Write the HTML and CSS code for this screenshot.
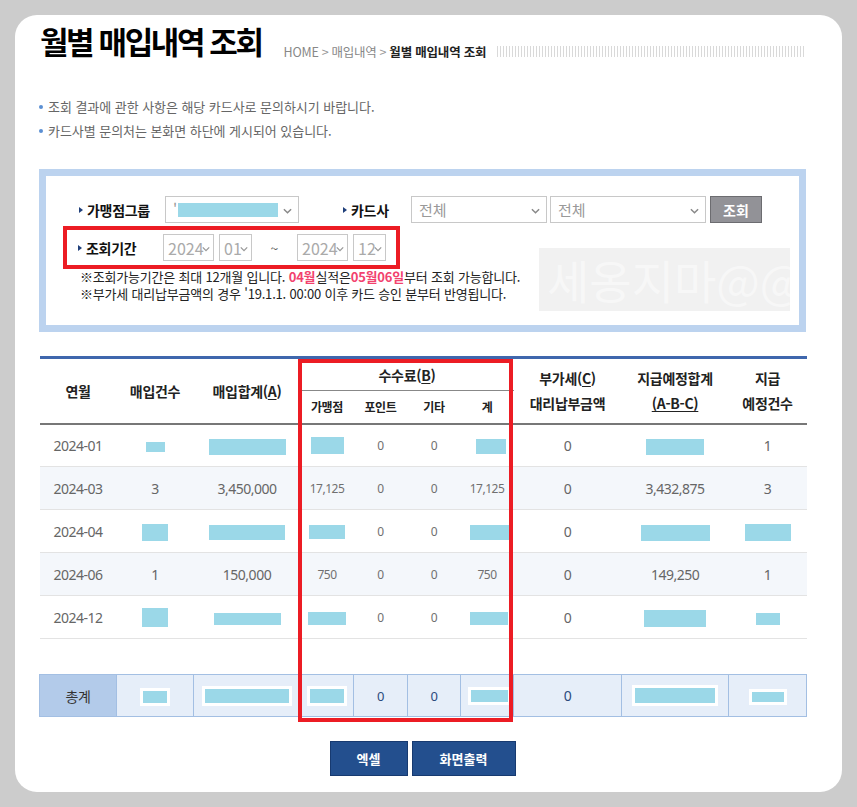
FILE: index.html
```html
<!DOCTYPE html>
<html lang="ko">
<head>
<meta charset="utf-8">
<title>월별 매입내역 조회</title>
<link rel="stylesheet" href="styles.css">
</head>
<body>
<div class="panel">
  <div class="title-row">
    <h1 class="title">월별 매입내역 조회</h1>
    <div class="crumb">HOME<span class="sep">&gt;</span>매입내역<span class="sep">&gt;</span><b>월별 매입내역 조회</b></div>
    <div class="stripes"></div>
  </div>

  <ul class="info">
    <li>조회 결과에 관한 사항은 해당 카드사로 문의하시기 바랍니다.</li>
    <li>카드사별 문의처는 본화면 하단에 게시되어 있습니다.</li>
  </ul>

  <div class="search">
    <div class="watermark">세옹지마@@</div>
    <div class="row">
      <div class="label w87">가맹점그룹</div>
      <div class="sel w134"><span class="val">'</span><span class="redact" style="width:100px;height:14px;margin-left:1px"></span><svg class="chev" viewBox="0 0 10 6"><path d="M1 1l4 4 4-4" fill="none" stroke="#888" stroke-width="1.6"/></svg></div>
      <div class="label w69 ml43">카드사</div>
      <div class="sel w136"><span class="val">전체</span><svg class="chev" viewBox="0 0 10 6"><path d="M1 1l4 4 4-4" fill="none" stroke="#888" stroke-width="1.6"/></svg></div>
      <div class="sel w156 ml3"><span class="val">전체</span><svg class="chev" viewBox="0 0 10 6"><path d="M1 1l4 4 4-4" fill="none" stroke="#888" stroke-width="1.6"/></svg></div>
      <button class="btn-search">조회</button>
    </div>
    <div class="row row2">
      <div class="label w86">조회기간</div>
      <div class="sel small w51"><span class="val">2024</span><svg class="chev" viewBox="0 0 10 6"><path d="M1 1l4 4 4-4" fill="none" stroke="#999" stroke-width="1.6"/></svg></div>
      <div class="sel small w33 ml5"><span class="val">01</span><svg class="chev" viewBox="0 0 10 6"><path d="M1 1l4 4 4-4" fill="none" stroke="#999" stroke-width="1.6"/></svg></div>
      <span class="tilde">~</span>
      <div class="sel small w51"><span class="val">2024</span><svg class="chev" viewBox="0 0 10 6"><path d="M1 1l4 4 4-4" fill="none" stroke="#999" stroke-width="1.6"/></svg></div>
      <div class="sel small w33 ml5"><span class="val">12</span><svg class="chev" viewBox="0 0 10 6"><path d="M1 1l4 4 4-4" fill="none" stroke="#999" stroke-width="1.6"/></svg></div>
    </div>
    <div class="notes">
      <p>※조회가능기간은 최대 12개월 입니다. <em>04월</em>실적은<em>05월06일</em>부터 조회 가능합니다.</p>
      <p>※부가세 대리납부금액의 경우 '19.1.1. 00:00 이후 카드 승인 분부터 반영됩니다.</p>
    </div>
    <div class="mark-search"></div>
  </div>

  <div class="table-wrap">
    <table class="grid">
      <colgroup>
        <col style="width:77px"><col style="width:77px"><col style="width:107px"><col style="width:53px"><col style="width:54px"><col style="width:53px"><col style="width:53px"><col style="width:108px"><col style="width:107px"><col style="width:78px">
      </colgroup>
      <thead>
        <tr class="h1">
          <th rowspan="2">연월</th>
          <th rowspan="2">매입건수</th>
          <th rowspan="2">매입합계(<u>A</u>)</th>
          <th colspan="4" class="fee">수수료(<u>B</u>)</th>
          <th rowspan="2" class="two">부가세(<u>C</u>)<br>대리납부금액</th>
          <th rowspan="2" class="two">지급예정합계<br><u>(A-B-C)</u></th>
          <th rowspan="2" class="two">지급<br>예정건수</th>
        </tr>
        <tr class="h2">
          <th class="sub">가맹점</th>
          <th class="sub">포인트</th>
          <th class="sub">기타</th>
          <th class="sub">계</th>
        </tr>
      </thead>
      <tbody>
        <tr>
          <td>2024-01</td>
          <td><span class="redact" style="width:19px;height:10px"></span></td>
          <td><span class="redact" style="width:77px;height:16px"></span></td>
          <td class="s"><span class="redact" style="width:33px;height:17px"></span></td>
          <td class="s">0</td>
          <td class="s">0</td>
          <td class="s"><span class="redact" style="width:30px;height:15px;margin-left:8px"></span></td>
          <td>0</td>
          <td><span class="redact" style="width:58px;height:16px"></span></td>
          <td>1</td>
        </tr>
        <tr class="alt">
          <td>2024-03</td>
          <td>3</td>
          <td>3,450,000</td>
          <td class="s">17,125</td>
          <td class="s">0</td>
          <td class="s">0</td>
          <td class="s">17,125</td>
          <td>0</td>
          <td>3,432,875</td>
          <td>3</td>
        </tr>
        <tr>
          <td>2024-04</td>
          <td><span class="redact" style="width:26px;height:17px"></span></td>
          <td><span class="redact" style="width:76px;height:15px"></span></td>
          <td class="s"><span class="redact" style="width:36px;height:14px"></span></td>
          <td class="s">0</td>
          <td class="s">0</td>
          <td class="s"><span class="redact" style="width:43px;height:15px;margin-left:8px"></span></td>
          <td>0</td>
          <td><span class="redact" style="width:69px;height:16px"></span></td>
          <td><span class="redact" style="width:46px;height:17px"></span></td>
        </tr>
        <tr class="alt">
          <td>2024-06</td>
          <td>1</td>
          <td>150,000</td>
          <td class="s">750</td>
          <td class="s">0</td>
          <td class="s">0</td>
          <td class="s">750</td>
          <td>0</td>
          <td>149,250</td>
          <td>1</td>
        </tr>
        <tr>
          <td>2024-12</td>
          <td><span class="redact" style="width:26px;height:19px"></span></td>
          <td><span class="redact" style="width:67px;height:12px"></span></td>
          <td class="s"><span class="redact" style="width:38px;height:13px"></span></td>
          <td class="s">0</td>
          <td class="s">0</td>
          <td class="s"><span class="redact" style="width:38px;height:13px;margin-left:4px"></span></td>
          <td>0</td>
          <td><span class="redact" style="width:62px;height:17px"></span></td>
          <td><span class="redact" style="width:24px;height:12px"></span></td>
        </tr>
        <tr class="empty"><td colspan="10"></td></tr>
      </tbody>
      <tfoot>
        <tr>
          <td class="total">총계</td>
          <td><span class="redact framed" style="width:24px;height:12px"></span></td>
          <td><span class="redact framed" style="width:84px;height:14px"></span></td>
          <td class="s"><span class="redact framed" style="width:34px;height:14px"></span></td>
          <td class="s">0</td>
          <td class="s">0</td>
          <td class="s"><span class="redact framed" style="width:37px;height:12px;margin-left:4px"></span></td>
          <td>0</td>
          <td><span class="redact framed" style="width:80px;height:15px"></span></td>
          <td><span class="redact framed" style="width:32px;height:10px"></span></td>
        </tr>
      </tfoot>
    </table>
    <div class="mark-table"></div>
  </div>

  <div class="actions">
    <button class="btn-blue w78">엑셀</button>
    <button class="btn-blue w104">화면출력</button>
  </div>
</div>
</body>
</html>
```

FILE: styles.css
```css
* { box-sizing: border-box; }
html, body { margin: 0; padding: 0; }
body {
  background: #cccccc;
  font-family: "Noto Sans CJK KR", "Noto Sans", sans-serif;
  color: #333;
  width: 857px;
  height: 807px;
  overflow: hidden;
}
.panel {
  margin: 15px;
  width: 827px;
  height: 777px;
  background: #fff;
  border-radius: 22px;
  padding: 7px 36px 0 24px;
}
.title-row {
  display: flex;
  align-items: flex-end;
  height: 38px;
}
.title {
  margin: 0 0 0 1px;
  font-size: 31px;
  line-height: 38px;
  font-weight: 700;
  letter-spacing: -2.4px;
  color: #000;
  white-space: nowrap;
}
.crumb {
  margin-left: 22px;
  font-size: 12.5px;
  line-height: 16px;
  color: #888;
  letter-spacing: -0.2px;
  white-space: nowrap;
  padding-bottom: 0;
}
.crumb .sep { color: #999; margin: 0 3px; }
.crumb b { color: #222; font-weight: 700; }
.stripes {
  flex: 1;
  height: 11px;
  margin-left: 11px;
  margin-bottom: 3px;
  background: repeating-linear-gradient(90deg, #d9d9d9 0 1px, transparent 1px 3px);
}

.info {
  list-style: none;
  margin: 35px 0 0 0;
  padding: 0;
}
.info li {
  position: relative;
  font-size: 13px;
  line-height: 24px;
  color: #666;
  padding-left: 9px;
  letter-spacing: -0.05px;
}
.info li::before {
  content: "";
  position: absolute;
  left: 0;
  top: 10px;
  width: 4px;
  height: 4px;
  border-radius: 50%;
  background: #5b8fd3;
}

.search {
  position: relative;
  margin-top: 26px;
  width: 767px;
  height: 163px;
  border: 7px solid #bcd3ef;
  padding: 20px 0 0 32px;
}
.row {
  position: relative;
  z-index: 1;
  display: flex;
  align-items: center;
  height: 27px;
}
.row2 { margin-top: 11px; margin-left: -1px; }
.label {
  position: relative;
  padding-left: 9px;
  font-size: 14px;
  font-weight: 700;
  color: #111;
  white-space: nowrap;
  letter-spacing: -0.3px;
}
.label::before {
  content: "";
  position: absolute;
  left: 1px;
  top: 50%;
  margin-top: -3px;
  border-left: 4px solid #1f3f7a;
  border-top: 3.5px solid transparent;
  border-bottom: 3.5px solid transparent;
}
.w87 { width: 87px; }
.w86 { width: 86px; }
.w69 { width: 69px; }
.ml43 { margin-left: 43px; }
.ml3 { margin-left: 3px; }
.ml5 { margin-left: 5px; }
.sel {
  position: relative;
  height: 27px;
  border: 1px solid #c8c8c8;
  background: #fff;
  display: flex;
  align-items: center;
  padding-left: 7px;
  color: #999;
  font-size: 15px;
}
.sel .val { white-space: nowrap; }
.sel .chev {
  position: absolute;
  right: 6px;
  top: 11px;
  width: 9px;
  height: 6px;
}
.sel.small { padding-left: 4px; font-size: 16px; color: #aaa; }
.sel.small .chev { right: 3px; width: 8px; }
.w134 { width: 134px; }
.w136 { width: 136px; }
.w156 { width: 156px; }
.w51 { width: 51px; }
.w33 { width: 33px; }
.redact {
  display: inline-block;
  background: #9bd8e8;
  vertical-align: middle;
}
.redact.framed { box-sizing: content-box; border: 3px solid #fff; }
.btn-search {
  margin-left: 4px;
  width: 52px;
  height: 27px;
  background: #929297;
  border: 1px solid #6c6c70;
  color: #fff;
  font-family: inherit;
  font-size: 14px;
  font-weight: 700;
  padding: 0;
}
.tilde {
  width: 45px;
  text-align: center;
  color: #555;
  font-size: 14px;
}
.notes {
  position: relative;
  z-index: 1;
  margin: 7px 0 0 2px;
  font-size: 13px;
  line-height: 17px;
  color: #222;
  letter-spacing: -0.2px;
}
.notes p { margin: 0; white-space: nowrap; }
.notes em { font-style: normal; font-weight: 700; color: #f2426e; }
.watermark {
  position: absolute;
  z-index: 0;
  left: 493px;
  top: 72px;
  width: 251px;
  height: 63px;
  background: #f1f1f1;
  color: rgba(255,255,255,0.45);
  font-size: 46px;
  line-height: 63px;
  padding-left: 8px;
  white-space: nowrap;
  overflow: hidden;
}
.mark-search {
  position: absolute;
  left: 17px;
  top: 50px;
  width: 337px;
  height: 43px;
  border: 4px solid #ec1c24;
  z-index: 2;
}

.table-wrap {
  position: relative;
  margin-top: 24px;
  width: 767px;
}
.grid {
  width: 767px;
  border-collapse: collapse;
  table-layout: fixed;
  border-top: 3px solid #3f67ad;
}
.grid th {
  font-size: 14px;
  font-weight: 700;
  color: #222;
  text-align: center;
  padding: 0;
  letter-spacing: -0.3px;
}
.grid th u { text-decoration: underline; text-underline-offset: 2px; }
.grid .h1 th { height: 33px; }
.grid .h2 th { height: 33px; }
.grid th.fee { border-bottom: 1px solid #888; }
.grid th.sub { font-size: 12px; }
.grid th.two { line-height: 25px; }
.grid thead tr:last-child th, .grid thead th[rowspan] { border-bottom: 2px solid #777; }
.grid td {
  height: 43px;
  text-align: center;
  font-family: "Noto Sans", "Noto Sans CJK KR", sans-serif;
  font-size: 14px;
  color: #666;
  padding: 0;
  border-bottom: 1px solid #e3e3e3;
  letter-spacing: -0.5px;
}
.grid td.s { font-size: 12px; color: #707070; }
.grid tr.alt td { background: #f4f7fb; }
.grid tr.empty td { height: 36px; border-bottom: none; }
.grid tfoot td {
  height: 42px;
  background: #e6eef9;
  border: 1px solid #a3bfe3;
  color: #2b4a7c;
}
.grid tfoot td.s { color: #2b4a7c; font-size: 13px; }
.grid tfoot td.total {
  background: #b3cbea;
  color: #333;
  font-family: "Noto Sans CJK KR", sans-serif;
}
.mark-table {
  position: absolute;
  left: 259px;
  top: 3px;
  width: 215px;
  height: 363px;
  border: 4px solid #ec1c24;
  pointer-events: none;
}

.actions {
  margin-top: 24px;
  display: flex;
  justify-content: center;
  gap: 4px;
}
.btn-blue {
  height: 35px;
  background: #234f8e;
  border: 1px solid #173a70;
  color: #fff;
  font-family: "Noto Sans CJK KR", sans-serif;
  font-size: 13px;
  font-weight: 700;
  padding: 0;
}
.w78 { width: 78px; }
.w104 { width: 104px; }
```
